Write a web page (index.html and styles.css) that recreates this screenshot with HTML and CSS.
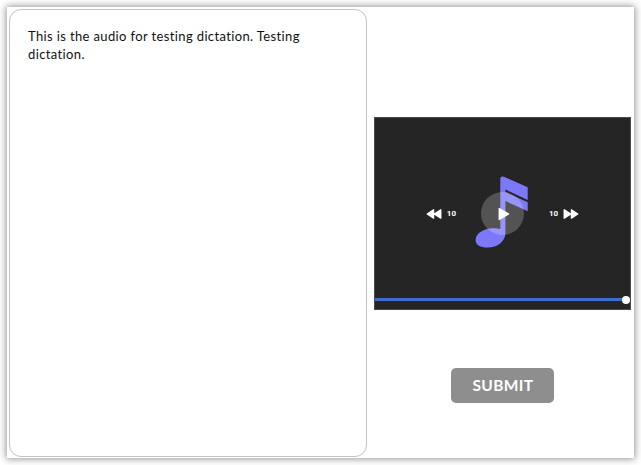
FILE: index.html
```html
<!DOCTYPE html>
<html lang="en">
<head>
<meta charset="utf-8">
<title>Dictation</title>
<link rel="stylesheet" href="styles.css">
</head>
<body>
<main class="card">
  <section class="transcript">This is the audio for testing dictation. Testing dictation.</section>
  <section class="side">
    <div class="player">
      <svg class="note" width="54" height="72" viewBox="0 0 54 72" aria-hidden="true">
        <path fill="#7c79f8" d="M25.3 3.2Q25.3-.6 29 .8L52.7 11.3V24L30.4 13.6V16L52.7 26.2V35.3L30.4 25V57C30.4 65.5 22.5 71.5 12.5 71.5C5.5 71.5.6 69.2.6 64C.6 57.3 9 52.2 17.5 52.2C21 52.2 23.5 52.5 25.3 53Z"/>
      </svg>
      <div class="controls">
        <button class="skip" type="button">
          <svg width="16" height="12" viewBox="0 0 16 12"><path d="M7.6 1.8V10.2L1.2 6ZM14.8 1.8V10.2L8.2 6Z"/></svg>
          <span>10</span>
        </button>
        <button class="play" type="button" aria-label="Play">
          <svg width="12" height="14" viewBox="0 0 12 14"><path d="M1.2 1.5V12.5L10.7 7Z"/></svg>
        </button>
        <button class="skip" type="button">
          <span>10</span>
          <svg width="16" height="12" viewBox="0 0 16 12"><path d="M1.2 1.8V10.2L7.8 6ZM8.4 1.8V10.2L14.8 6Z"/></svg>
        </button>
      </div>
      <div class="track"><span class="thumb"></span></div>
    </div>
    <button class="submit" type="button">SUBMIT</button>
  </section>
</main>
</body>
</html>
```
FILE: styles.css
```css
* { box-sizing: border-box; }

body {
  margin: 0;
  padding: 7px;
  background: #fff;
  font-family: Lato, "Liberation Sans", sans-serif;
}

button {
  border: 0;
  padding: 0;
  font-family: inherit;
}

.card {
  display: flex;
  gap: 7px;
  width: 627px;
  height: 451px;
  padding: 2px 3px 2px 2px;
  background: #fff;
  box-shadow: 0 0 7px 1px rgba(0, 0, 0, 0.42);
}

.transcript {
  width: 358px;
  height: 448px;
  flex: none;
  padding: 17px 40px 0 18px;
  border: 1px solid #c2c2c2;
  border-radius: 12px;
  color: #111;
  font-size: 13px;
  line-height: 18px;
  letter-spacing: 0.37px;
}

.side {
  display: flex;
  flex-direction: column;
  align-items: center;
  width: 257px;
  padding-top: 108px;
}

.player {
  position: relative;
  display: flex;
  flex-direction: column;
  justify-content: space-between;
  width: 257px;
  height: 193px;
  padding: 74px 0 8px;
  background: #252525;
  border: 1px solid #4a4a4a;
}

.note {
  position: absolute;
  left: 100px;
  top: 58px;
}

.controls {
  position: relative;
  display: flex;
  align-items: center;
  justify-content: center;
  gap: 25px;
}

.skip {
  display: flex;
  align-items: center;
  gap: 5px;
  background: none;
  color: #fff;
  font: 700 8px/10px Roboto, sans-serif;
}

.skip svg,
.play svg {
  fill: #fff;
  stroke: #fff;
  stroke-width: 1.3;
  stroke-linejoin: round;
}

.play {
  display: flex;
  align-items: center;
  justify-content: center;
  width: 43px;
  height: 43px;
  padding-left: 3px;
  border-radius: 50%;
  background: rgba(255, 255, 255, 0.21);
}

.track {
  display: flex;
  align-items: center;
  justify-content: flex-end;
  height: 3px;
  background: #3e6dd0;
}

.thumb {
  width: 8px;
  height: 8px;
  border-radius: 50%;
  background: #fff;
}

.submit {
  width: 103px;
  height: 35px;
  margin-top: 58px;
  padding: 0 0 2px 1px;
  border-radius: 5px;
  background: #8e8e8e;
  color: #fff;
  font-size: 15.5px;
  font-weight: 700;
  letter-spacing: 0.4px;
}
```
